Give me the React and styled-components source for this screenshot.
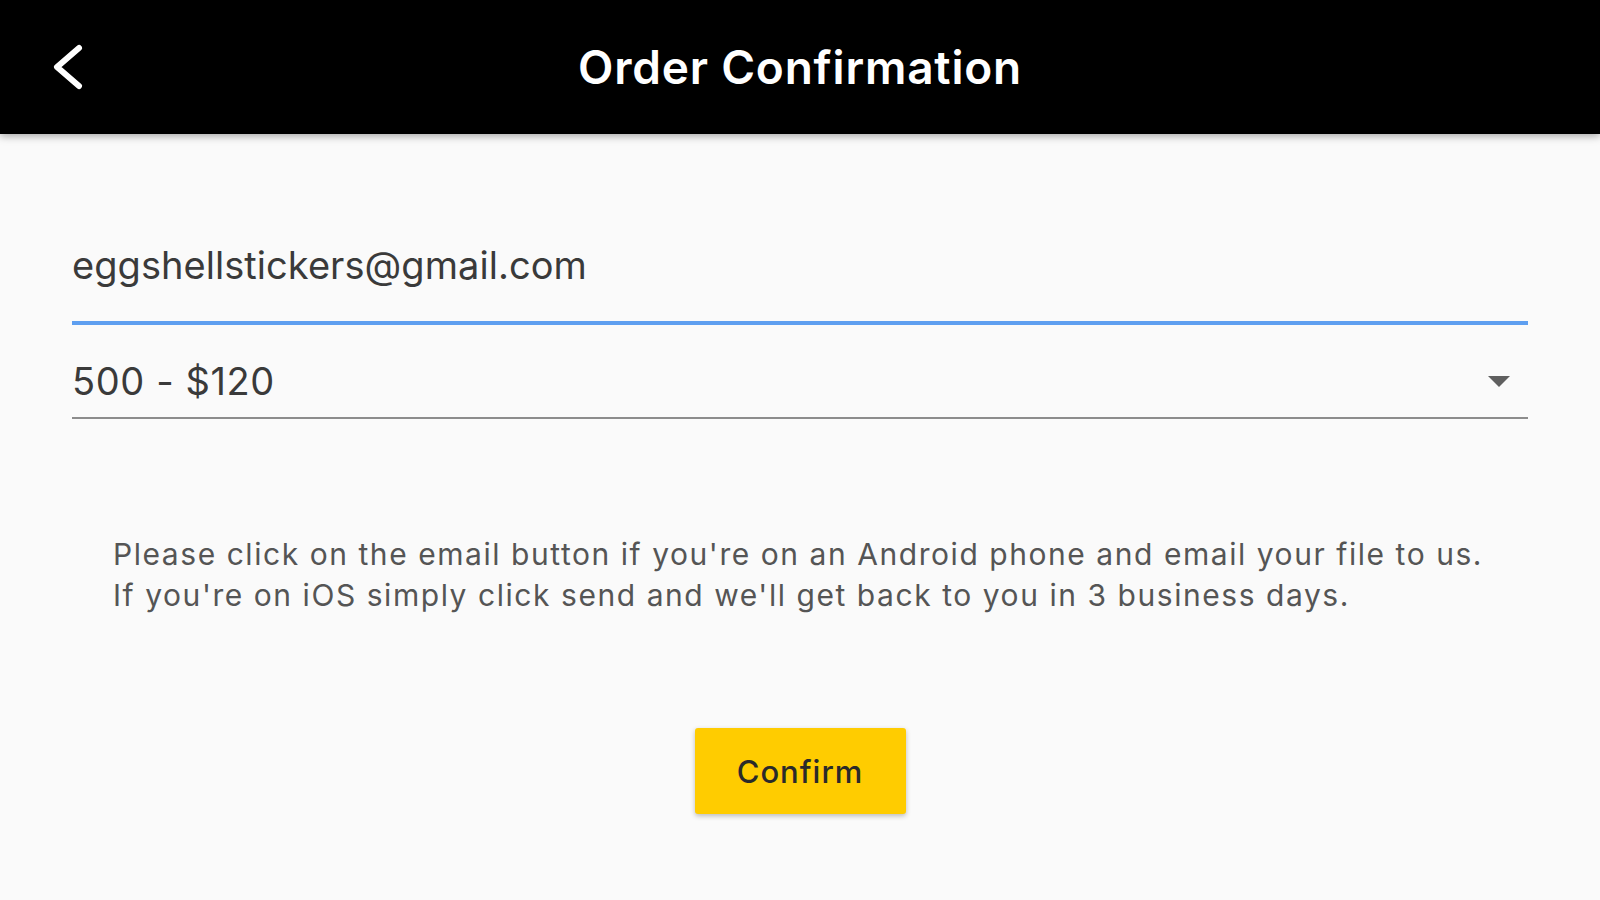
import styled, { createGlobalStyle } from "styled-components";

const GlobalStyle = createGlobalStyle`
  body {
    margin: 0;
    background-color: #fafafa;
    font-family: Inter, Roboto, "Liberation Sans", sans-serif;
  }
`;

export const Page = styled.div`
  width: 100%;
  min-height: 900px;
  background-color: #fafafa;
  overflow: hidden;
`;

export const AppBar = styled.header`
  position: relative;
  z-index: 1;
  height: 134px;
  background-color: #000;
  display: grid;
  grid-template-columns: 1fr auto 1fr;
  align-items: center;
  box-shadow: 0 2px 8px rgba(0, 0, 0, 0.35);
`;

export const BackButton = styled.button`
  justify-self: start;
  margin-left: 50px;
  padding: 0;
  border: none;
  background: none;
  display: flex;
  align-items: center;
  cursor: pointer;
`;

export const Title = styled.h1`
  margin: 0;
  color: #fff;
  font-size: 46px;
  font-weight: 600;
  letter-spacing: 0.8px;
`;

export const Form = styled.main`
  padding: 80px 72px 0;
`;

export const Field = styled.div`
  display: flex;
  align-items: center;
  justify-content: space-between;
  padding: ${({ top }) => top}px 0 ${({ bottom }) => bottom}px;
  border-bottom: ${({ focused }) =>
    focused ? "4px solid #5e9ff0" : "2px solid #8c8c8c"};
`;

export const FieldText = styled.span`
  font-size: ${({ size }) => size}px;
  line-height: 48px;
  color: #3a3a3a;
  letter-spacing: ${({ spacing }) => spacing}px;
`;

export const Arrow = styled.span`
  width: 0;
  height: 0;
  margin-right: 18px;
  margin-top: 0;
  border-left: 11px solid transparent;
  border-right: 11px solid transparent;
  border-top: 11px solid #5f5f5f;
`;

export const Note = styled.p`
  margin: 115px 0 0;
  padding: 0 0 0 41px;
  font-size: 30px;
  line-height: 41px;
  color: #555;
  letter-spacing: 1.55px;
  white-space: nowrap;
`;

export const ButtonRow = styled.div`
  display: flex;
  justify-content: center;
  margin-top: 112px;
`;

export const ConfirmButton = styled.button`
  width: 211px;
  height: 86px;
  border: none;
  border-radius: 3px;
  background-color: #ffcc00;
  box-shadow: 0 2px 5px rgba(0, 0, 0, 0.25);
  font-family: Inter, Roboto, "Liberation Sans", sans-serif;
  font-size: 31px;
  font-weight: 500;
  letter-spacing: 1px;
  color: #2a2a2a;
  cursor: pointer;
`;

function App() {
  return (
    <Page>
      <GlobalStyle />
      <AppBar>
        <BackButton aria-label="Back">
          <svg width="34" height="48" viewBox="0 0 34 48">
            <polyline
              points="29,5 7,24 29,43"
              fill="none"
              stroke="#fff"
              strokeWidth="6"
              strokeLinecap="round"
              strokeLinejoin="round"
            />
          </svg>
        </BackButton>
        <Title>Order Confirmation</Title>
        <div />
      </AppBar>
      <Form>
        <Field focused top={27} bottom={32}>
          <FieldText size={38} spacing={0.05}>
            eggshellstickers@gmail.com
          </FieldText>
        </Field>
        <Field top={32} bottom={12}>
          <FieldText size={38} spacing={0.6}>
            500 - $120
          </FieldText>
          <Arrow />
        </Field>
        <Note>
          Please click on the email button if you're on an Android phone and
          email your file to us.
          <br />
          If you're on iOS simply click send and we'll get back to you in 3
          business days.
        </Note>
        <ButtonRow>
          <ConfirmButton>Confirm</ConfirmButton>
        </ButtonRow>
      </Form>
    </Page>
  );
}

export default App;
